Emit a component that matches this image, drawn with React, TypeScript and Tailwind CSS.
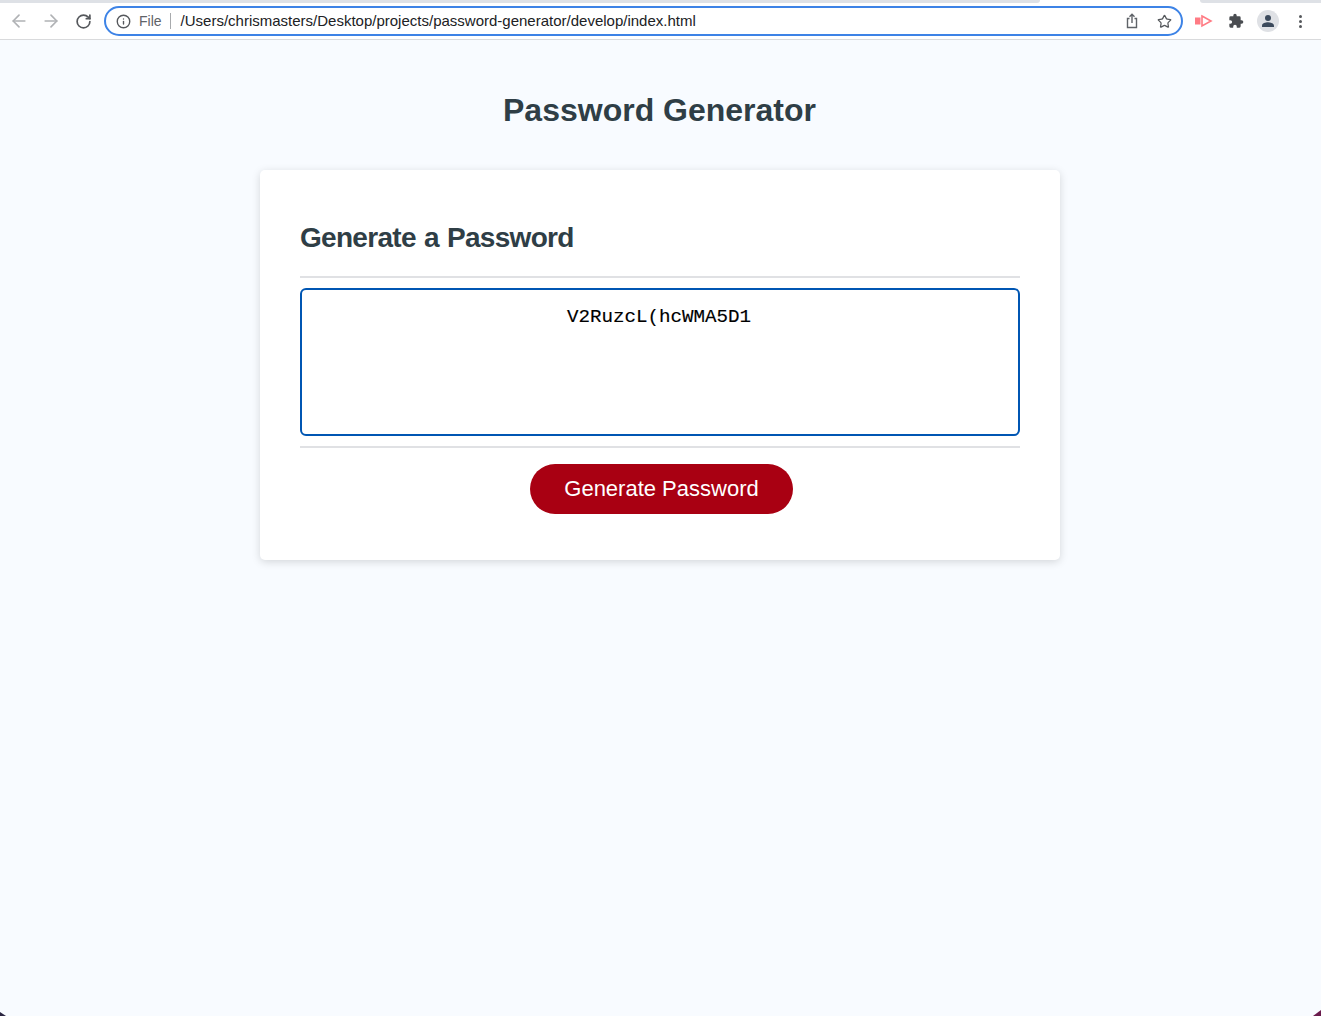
import { ArrowLeft, ArrowRight, RotateCw, Info, Star } from "lucide-react";

function ShareIcon() {
  return (
    <svg width="14" height="16" viewBox="0 0 14 16" fill="none" stroke="#5f6368" strokeWidth="1.4">
      <path d="M4.5 5.5H2.5V14.5H11.5V5.5H9.5" />
      <path d="M7 10V1.5M4.5 3.8L7 1.3L9.5 3.8" />
    </svg>
  );
}

function LoomIcon() {
  return (
    <svg width="18" height="14" viewBox="0 0 18 14">
      <rect x="0" y="3.500" width="5.500" height="7" fill="#ff7b84" />
      <path d="M7 2L16 7L7 12Z" fill="none" stroke="#ff7b84" strokeWidth="1.600" />
    </svg>
  );
}

function PuzzleIcon() {
  return (
    <svg width="16" height="16" viewBox="0 0 24 24" fill="#4a4d51">
      <path d="M20.5 11H19V7a2 2 0 0 0-2-2h-4V3.5a2.5 2.5 0 0 0-5 0V5H4a2 2 0 0 0-2 2v3.8h1.5a2.7 2.7 0 0 1 0 5.4H2V20a2 2 0 0 0 2 2h3.8v-1.5a2.7 2.7 0 0 1 5.4 0V22H17a2 2 0 0 0 2-2v-4h1.500a2.500 2.500 0 0 0 0-5z" />
    </svg>
  );
}

function AvatarIcon() {
  return (
    <div className="flex h-[22px] w-[22px] items-center justify-center rounded-full bg-[#dfe1e5]">
      <svg width="14" height="14" viewBox="0 0 14 14" fill="#3c4a5c">
        <circle cx="7" cy="4" r="3" />
        <path d="M1 13V11.500C1 9.500 4.500 8.300 7 8.300C9.500 8.300 13 9.500 13 11.500V13Z" />
      </svg>
    </div>
  );
}

function BrowserBar() {
  return (
    <div className="flex h-[40px] flex-col border-b border-[#d9dadc] bg-white">
      <div className="flex h-[3px]">
        <div className="w-[1040px] rounded-br-[6px] bg-[#dee1e6]" />
        <div className="grow" />
        <div className="w-[121px] rounded-bl-[6px] bg-[#dee1e6]" />
      </div>
      <div className="flex grow items-center pl-[9px]">
        <ArrowLeft size={20} className="text-[#b0b2b5]" />
        <ArrowRight size={20} className="ml-[12px] text-[#b0b2b5]" />
        <RotateCw size={17} strokeWidth={2.4} className="ml-[14px] text-[#55585c]" />
        <div className="ml-[12px] flex h-[30px] w-[1079px] items-center rounded-full border-2 border-[#3d83e6] pl-[10px] pr-[9px]">
          <Info size={15} strokeWidth={2.2} className="text-[#55585c]" />
          <span className="ml-[8px] text-[14px] text-[#5f6368]">File</span>
          <div className="ml-[8px] h-[16px] w-px bg-[#a8aaad]" />
          <span className="ml-[10px] text-[15px] text-[#202124]">
            /Users/chrismasters/Desktop/projects/password-generator/develop/index.html
          </span>
          <div className="ml-auto flex items-center gap-[18px]">
            <ShareIcon />
            <Star size={15} strokeWidth={2} className="text-[#55585c]" />
          </div>
        </div>
        <div className="ml-[12px] flex items-center">
          <LoomIcon />
          <div className="ml-[15px]">
            <PuzzleIcon />
          </div>
          <div className="ml-[13px]">
            <AvatarIcon />
          </div>
          <div className="ml-[20px] flex flex-col gap-[2px]">
            <div className="h-[3px] w-[3px] rounded-full bg-[#55585c]" />
            <div className="h-[3px] w-[3px] rounded-full bg-[#55585c]" />
            <div className="h-[3px] w-[3px] rounded-full bg-[#55585c]" />
          </div>
        </div>
      </div>
    </div>
  );
}

export default function App() {
  return (
    <div className="relative flex h-[1016px] flex-col overflow-hidden bg-[#f8fbff] font-['Liberation_Sans',sans-serif]">
      <BrowserBar />
      <h1 className="mt-[50px] pr-[2px] text-center text-[32px]/[40px] font-bold text-[#2f3e46]">
        Password Generator
      </h1>
      <div className="mt-[40px] ml-[260px] flex h-[390px] w-[800px] flex-col rounded-[5px] bg-white px-[40px] pt-[50px] shadow-[0_2px_8px_rgba(0,0,0,0.15)]">
        <h2 className="text-[28px]/[36px] font-bold tracking-[-0.7px] text-[#2f3e46] [word-spacing:1.1px]">
          Generate a Password
        </h2>
        <div className="mt-[20px] flex flex-col border-y-2 border-[#e0e1e4] py-[10px]">
          <div className="h-[148px] rounded-[6px] border-2 border-[#0056b3] pt-[16px] pr-[2px] text-center font-['Liberation_Mono',monospace] text-[19.200px]/[22px] text-black [-webkit-text-stroke:0.15px_black]">
            V2RuzcL(hcWMA5D1
          </div>
        </div>
        <button className="mt-[16px] ml-[230px] h-[50px] w-[263px] rounded-full bg-[#a90012] pb-[2px] text-[22px] text-white">
          Generate Password
        </button>
      </div>
      <div className="absolute bottom-0 left-0 h-[4px] w-[6px] bg-[#2a2440] [clip-path:polygon(0_0,100%_100%,0_100%)]" />
      <div className="absolute bottom-0 right-0 h-[6px] w-[8px] bg-[#6a1b4d] [clip-path:polygon(100%_0,100%_100%,0_100%)]" />
    </div>
  );
}
